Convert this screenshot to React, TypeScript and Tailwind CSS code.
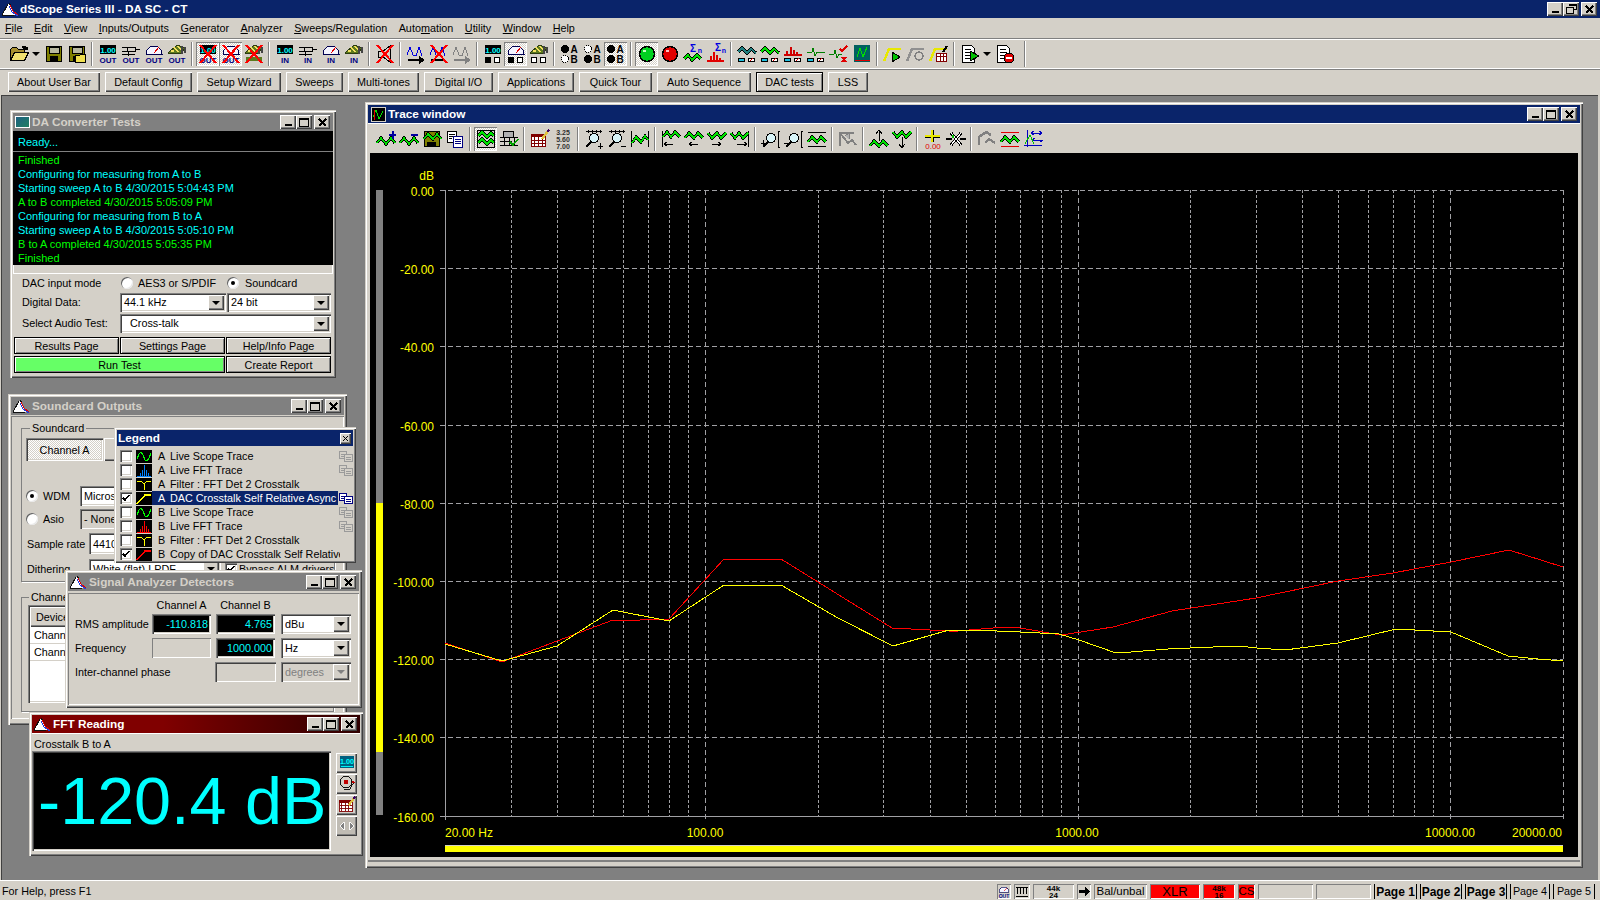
import type { ReactNode } from "react";
import clsx from "clsx";

const RAISED = "shadow-[inset_1px_1px_0_#fff,inset_-1px_-1px_0_#404040,inset_-2px_-2px_0_#808080]";
const WINDOW = "shadow-[inset_1px_1px_0_#d4d0c8,inset_2px_2px_0_#fff,inset_-1px_-1px_0_#404040,inset_-2px_-2px_0_#808080]";
const SUNKEN = "shadow-[inset_1px_1px_0_#808080,inset_2px_2px_0_#404040,inset_-1px_-1px_0_#fff,inset_-2px_-2px_0_#d4d0c8]";
const THIN_SUNKEN = "shadow-[inset_1px_1px_0_#808080,inset_-1px_-1px_0_#fff]";
const BLACK_BTN = "border border-black pt-[1px] shadow-[inset_1px_1px_0_#fff,inset_-1px_-1px_0_#808080]";
const DITHER = "bg-[repeating-conic-gradient(#fff_0_25%,#d4d0c8_0_50%)] bg-size-[2px_2px]";

const Wave = ({ d = "M2 15l4-5 5 6 5-6 4 5", c = "#00e000" }: { d?: string; c?: string }) => (
  <>
    <path d={d} fill="none" stroke="#000" strokeWidth="3" />
    <path d={d} fill="none" stroke={c} strokeWidth="1.5" />
  </>
);

const RedX = () => <path d="M3 2l16 18M19 2L3 20" stroke="#f00" strokeWidth="2" fill="none" />;
const Txt = ({ x = 11, y, s = 8, c = "#000080", t, b = true }: { x?: number; y: number; s?: number; c?: string; t: string; b?: boolean }) => (
  <text x={x} y={y} fontSize={s} fontWeight={b ? 700 : 400} fill={c} textAnchor="middle" shapeRendering="auto">{t}</text>
);

const Readout = () => (
  <>
    <rect x="3" y="2" width="16" height="9" fill="#000" />
    <Txt y={9.5} s={8} c="#00ffff" t="1.00" />
  </>
);
const Switch = () => <path d="M2 4h13v4H2M7 4v4M15 6h5M2 11h6M8 9v4M8 11h7" fill="none" stroke="#000" />;
const Meter = () => (
  <>
    <path d="M3 11a8 8 0 0 1 16 0z" fill="#f4f4ff" stroke="#000050" />
    <path d="M11 10l5-6" stroke="#e00000" />
  </>
);
const Board = () => (
  <>
    <path d="M2 10l9-8 8 3-5 6z" fill="#5d7a1e" stroke="#2c3c10" />
    <path d="M8 4l4 5M12 3l4 5M5 8h3" stroke="#f4e060" strokeWidth="1.5" />
    <path d="M16 3v8M19 4v6" stroke="#444" strokeWidth="2" />
  </>
);
const Circles = ({ a = false, b = false }: { a?: boolean; b?: boolean }) => (
  <>
    <circle cx="6" cy="17" r="3" fill={a ? "#000" : "#fff"} stroke="#000" />
    <circle cx="15" cy="17" r="3" fill={b ? "#000" : "#fff"} stroke="#000" />
  </>
);
const Floppy = () => (
  <>
    <rect x="3.5" y="3.5" width="15" height="15" fill="#808000" stroke="#000" />
    <rect x="6" y="4" width="10" height="6" fill="#b8b8a0" stroke="#000" />
    <rect x="7" y="13" width="8" height="5" fill="#000" />
  </>
);
const Calendar = () => (
  <>
    <rect x="2.5" y="6.5" width="14" height="12" fill="#fff" stroke="#800000" />
    <rect x="2" y="6" width="15" height="3" fill="#800000" />
    <path d="M5 9v9M9 9v9M13 9v9M3 12h13M3 15h13" stroke="#800000" />
    <path d="M13 11l6-8" stroke="#e0c040" strokeWidth="2.5" />
    <path d="M18 4l2-2" stroke="#400060" strokeWidth="2.5" />
  </>
);
const Magnifier = ({ m }: { m?: string }) => (
  <>
    <circle cx="11" cy="10" r="4.5" fill="#d8f4f8" stroke="#000" />
    <path d="M8 14l-5 5" stroke="#000" strokeWidth="2" />
    {m && <path d={m} stroke="#000" />}
  </>
);
const RadioAB = ({ a, b }: { a: boolean; b: boolean }) => (
  <>
    <circle cx="6" cy="6" r="3.5" fill={a ? "#000" : "#fff"} stroke="#000" strokeDasharray={a ? undefined : "1 1"} />
    <circle cx="6" cy="16" r="3.5" fill={b ? "#000" : "#fff"} stroke="#000" strokeDasharray={b ? undefined : "1 1"} />
    <Txt x={15} y={10} s={10} c="#000" t="A" />
    <Txt x={15} y={20} s={10} c="#000" t="B" />
  </>
);
const Chips = () => (
  <>
    <rect x="2.5" y="15.5" width="6" height="3" fill="#20c0e0" stroke="#000" />
    <rect x="12.5" y="15.5" width="6" height="3" fill="#fff" stroke="#000" />
    <path d="M14 17.5l3-2" stroke="#e00000" />
  </>
);
const Ramp = ({ c = "#e8e800" }: { c?: string }) => <path d="M2 18l5-12h12" fill="none" stroke={c} strokeWidth="2.5" />;
const Doc = () => (
  <>
    <path d="M3.5 2.5h9l3 3v14h-12z" fill="#fff" stroke="#000" />
    <path d="M6 6h6M6 9h7M6 12h7M6 15h7" stroke="#000" />
  </>
);
const Copies = ({ c = "#000080" }: { c?: string }) => (
  <>
    <rect x="0.5" y="0.5" width="7" height="7" fill={c === "#000080" ? "#fff" : "#d4d0c8"} stroke={c} />
    <path d="M2 3h4M2 5h4" stroke={c} />
    <rect x="5.5" y="3.5" width="8" height="7" fill={c === "#000080" ? "#fff" : "#d4d0c8"} stroke={c} />
    <path d="M7 6h5M7 8h5" stroke={c} />
  </>
);

const ICONS: Record<string, ReactNode> = {
  folder: (
    <>
      <path d="M2.5 17.5v-11l2-2h4l2 2h6v3" fill="#a89030" stroke="#000" />
      <path d="M6.5 9.5h14l-4 8h-14z" fill="#f0e070" stroke="#000" />
      <path d="M13 4q3-3 6 0l1-1v4h-4z" fill="#000" />
    </>
  ),
  floppy: <Floppy />,
  floppyOpen: (
    <>
      <Floppy />
      <path d="M9.5 19.5v-7h4l1-1h5v8z" fill="#f0e050" stroke="#000" />
    </>
  ),
  rOut: (<><Readout /><Txt y={20} t="OUT" /></>),
  sOut: (<><Switch /><Txt y={20} t="OUT" /></>),
  mOut: (<><Meter /><Txt y={20} t="OUT" /></>),
  bOut: (<><Board /><Txt y={20} t="OUT" /></>),
  rOutX: (<><Readout /><Txt y={20} t="OUT" /><RedX /></>),
  mOutX: (<><Meter /><Txt y={20} t="OUT" /><RedX /></>),
  bOutX: (<><Board /><path d="M3 14h16v4H3z" fill="#5d7a1e" /><RedX /></>),
  rIn: (<><Readout /><Txt y={20} t="IN" /></>),
  sIn: (<><Switch /><Txt y={20} t="IN" /></>),
  mIn: (<><Meter /><Txt y={20} t="IN" /></>),
  bIn: (<><Board /><Txt y={20} t="IN" /></>),
  speakerX: (
    <>
      <path d="M4 8h5l7-5v16l-7-5H4z" fill="#d4d0c8" stroke="#000" />
      <RedX />
    </>
  ),
  waveArrow: (
    <>
      <path d="M2 12l3-8 3 8 3 1 3-9 3 9" fill="none" stroke="#0000e0" />
      <path d="M3 17h12" stroke="#000" strokeWidth="2" />
      <path d="M14 13l6 4-6 4z" fill="#000" />
    </>
  ),
  waveX: (
    <>
      <path d="M2 12l3-8 3 8 3 1 3-9 3 9" fill="none" stroke="#0000e0" />
      <path d="M3 17h14" stroke="#000" strokeWidth="2" />
      <RedX />
    </>
  ),
  waveGray: (
    <>
      <path d="M2 12l3-8 3 8 3 1 3-9 3 9" fill="none" stroke="#808080" />
      <path d="M3 17h12" stroke="#808080" strokeWidth="2" />
      <path d="M14 13l6 4-6 4z" fill="#808080" />
    </>
  ),
  rCirc: (<><Readout /><Circles a /></>),
  mCirc: (<><Meter /><Circles a /></>),
  bCirc: (<><Board /><Circles /></>),
  abA: <RadioAB a b={false} />,
  abB: <RadioAB a={false} b />,
  abAB: <RadioAB a b />,
  greenBall: (
    <>
      <circle cx="11" cy="11" r="7.5" fill="#00d020" stroke="#000" strokeWidth="1.5" />
      <circle cx="8.5" cy="8" r="1.5" fill="#c0ffc0" />
    </>
  ),
  redBall: (
    <>
      <circle cx="11" cy="11" r="7.5" fill="#e00000" stroke="#000" strokeWidth="1.5" />
      <circle cx="8.5" cy="8" r="1.5" fill="#ffc0c0" />
    </>
  ),
  sigmaWave: (
    <>
      <Wave d="M2 16l4-4 4 5 5-5 4 4" />
      <Txt x={11} y={9} s={10} c="#0000e0" t="Σ" />
      <Txt x={18} y={10} s={7} c="#0000e0" t="n" />
    </>
  ),
  sigmaFft: (
    <>
      <path d="M2 18h17M6 18v-5M9 18v-9M12 18v-6M15 18v-3" stroke="#e00000" strokeWidth="2" />
      <Txt x={13} y={8} s={10} c="#0000e0" t="Σ" />
      <Txt x={19} y={10} s={7} c="#0000e0" t="n" />
    </>
  ),
  tealWave: (<><Wave d="M2 9l4-4 5 5 4-4 5 4" c="#208080" /><Chips /></>),
  greenWave: (<><Wave d="M2 9l4-4 5 5 4-4 5 4" /><Chips /></>),
  redFft: (
    <>
      <path d="M2 12h18M5 12V8M9 12V4M12 12V7M15 12V9" stroke="#d00000" strokeWidth="2" />
      <Chips />
    </>
  ),
  greenFft: (
    <>
      <path d="M2 9h5l1-4 2 8 2-4h8" fill="none" stroke="#008000" />
      <Chips />
    </>
  ),
  checkX: (
    <>
      <path d="M1 11h5l1-4 2 8 2-4h3" fill="none" stroke="#008000" />
      <path d="M12 6l2 2 5-5" fill="none" stroke="#e00000" strokeWidth="1.5" />
      <path d="M14 14l4 5M18 14l-4 5" stroke="#e00000" strokeWidth="2" />
    </>
  ),
  graphBox: (
    <>
      <rect x="3" y="2" width="16" height="17" fill="#006060" />
      <path d="M4 17h15" stroke="#e00000" />
      <path d="M6 14l3-9 3 9 4-10" fill="none" stroke="#00e000" />
    </>
  ),
  rampPlay: (<><Ramp /><path d="M10 9l8 5-8 5z" fill="#00c000" stroke="#000" /></>),
  rampGray: (<><Ramp c="#909090" /><circle cx="14" cy="13" r="4" fill="#d4d0c8" stroke="#808080" strokeWidth="1.5" /></>),
  rampCal: (<><Ramp /><rect x="8.5" y="10.5" width="10" height="8" fill="#fff" stroke="#800000" /><path d="M9 13h9M12 11v7M15 11v7" stroke="#800000" /><path d="M15 9l4-6" stroke="#000" strokeWidth="2" /></>),
  docPlay: (<><Doc /><path d="M11 8l9 5-9 5z" fill="#00c000" stroke="#000" /></>),
  docStop: (<><Doc /><circle cx="15" cy="15" r="5" fill="#e00000" stroke="#000" /><path d="M12 15h6" stroke="#fff" strokeWidth="2" /></>),
  addWave: (<><Wave /><path d="M14 7h7M17.5 3v8" stroke="#0000a0" strokeWidth="2" /></>),
  subWave: (<><Wave /><path d="M13 7h7" stroke="#0000a0" strokeWidth="2" /></>),
  saveWave: (
    <>
      <rect x="3.5" y="3.5" width="15" height="15" fill="#808000" stroke="#000" />
      <rect x="6" y="14" width="9" height="4" fill="#000" />
      <Wave d="M3 11l4-5 5 5 4-5 4 5" />
    </>
  ),
  copyDoc: (
    <>
      <rect x="3.5" y="3.5" width="9" height="11" fill="#fff" stroke="#000" />
      <path d="M5 6h6M5 8h6M5 10h3" stroke="#000" />
      <rect x="9.5" y="8.5" width="9" height="11" fill="#fff" stroke="#000080" />
      <path d="M11 11h6M11 13h6M11 15h6" stroke="#000080" />
    </>
  ),
  graphP: (
    <>
      <rect x="2.5" y="2.5" width="17" height="17" fill="#d4d0c8" stroke="#000" />
      <Wave d="M3 8l4-4 5 5 4-4 3 3" />
      <Wave d="M3 15l4-4 5 5 4-4 3 3" />
    </>
  ),
  gridGraph: (
    <>
      <path d="M5 3h10v6H5z" fill="#b0b0b0" stroke="#000" />
      <path d="M2 9h18M2 13h12M2 17h18M6 9v9M11 9v9M16 9v9" stroke="#000" />
      <path d="M12 14l3 3 5-6" fill="none" stroke="#00a000" strokeWidth="1.5" />
    </>
  ),
  calendar: <Calendar />,
  numbers: (
    <>
      <Txt y={7} c="#303030" s={7} t="3.25" />
      <Txt y={14} c="#303030" s={7} t="5.60" />
      <Txt y={21} c="#303030" s={7} t="7.00" />
    </>
  ),
  zoomIn: (<><path d="M3 3.5h16M5 2v3M9 2v3M13 2v3M17 2v3" stroke="#000" /><Magnifier m="M15 18h5M17.5 15v6" /></>),
  zoomOut: (<><path d="M3 3.5h16M5 2v3M9 2v3M13 2v3M17 2v3" stroke="#000" /><Magnifier m="M15 18h5" /></>),
  axisWave: (<><path d="M2.5 3v16M19.5 3v16" stroke="#000" /><Wave d="M3 15l4-6 5 5 4-6 3 4" /></>),
  waveEndL: (<><path d="M2.5 3v16" stroke="#000" /><Wave d="M3 9l4-5 4 5 4-5 5 5" /><path d="M4 16h9M4 16l3-2M4 16l3 2" stroke="#000" fill="none" /></>),
  waveL: (<><Wave d="M2 10l4-5 5 5 4-5 5 5" /><path d="M6 16h9M6 16l3-2M6 16l3 2" stroke="#000" fill="none" /></>),
  waveR: (<><Wave d="M2 5l4 5 5-5 4 5 5-5" /><path d="M6 16h9M15 16l-3-2M15 16l-3 2" stroke="#000" fill="none" /></>),
  waveEndR: (<><path d="M19.5 3v16" stroke="#000" /><Wave d="M2 5l4 5 4-5 4 5 5-5" /><path d="M8 16h10M18 16l-3-2M18 16l-3 2" stroke="#000" fill="none" /></>),
  zoomYIn: (<><Magnifier m="M1 15h5M3.5 12v6" /><path d="M20 3h-2v16h2" fill="none" stroke="#000" /></>),
  zoomYOut: (<><Magnifier m="M1 15h5" /><path d="M20 3h-2v16h2" fill="none" stroke="#000" /></>),
  waveBetween: (<><path d="M2 4.5h18M2 18.5h18" stroke="#000" /><Wave d="M2 14l4-5 5 5 4-5 5 5" /></>),
  grayTool: (<><path d="M3 18V5h14M3 5l8 10 4-3 4 5" fill="none" stroke="#808080" strokeWidth="2" /><path d="M8 8l4-3v6" fill="#b0b0b0" stroke="#808080" /></>),
  upWave: (<><Wave d="M2 18l4-5 5 5 4-5 5 5" /><path d="M11 13V2M11 2l-3 4M11 2l3 4" fill="none" stroke="#000" /></>),
  downWave: (<><Wave d="M2 4l4 5 5-5 4 5 5-5" /><path d="M11 9v11M11 20l-3-4M11 20l3-4" fill="none" stroke="#000" /></>),
  cursor: (
    <>
      <path d="M3 8h15M10 2v12" stroke="#000" strokeWidth="3" />
      <path d="M3 8h15M10 2v12" stroke="#e8e800" strokeWidth="1.5" />
      <Txt y={21} s={8} c="#e00000" b={false} t="0.00" />
    </>
  ),
  crossArrows: (
    <>
      <path d="M6 5l10 12M16 5L6 17" stroke="#000" strokeWidth="3" />
      <path d="M6 5l10 12M16 5L6 17" stroke="#fff" strokeWidth="1" />
      <path d="M1 11h6M21 11h-6" stroke="#000" strokeWidth="1.5" />
      <path d="M8 7v3" stroke="#00c000" strokeWidth="2" />
    </>
  ),
  grayWave: (<><path d="M3 17V9l7-5 5 3M9 15l4-4 6 4" fill="none" stroke="#808080" strokeWidth="2.5" /></>),
  redLines: (<><path d="M2 4.5h18M2 18.5h18" stroke="#e00000" /><Wave d="M2 14l4-5 5 5 4-5 5 5" /></>),
  graphArrow: (
    <>
      <path d="M5.5 2v17M2 17.5h18" stroke="#0000c0" />
      <path d="M9 5h11M9 5l3-2M9 5l3 2M20 5l-3-2M20 5l-3 2M10 12h11M10 12l3-2M21 12l-3 2" stroke="#0000c0" fill="none" />
      <path d="M3 16l5-9 4 9" fill="none" stroke="#00c000" />
    </>
  ),
  readoutLine: (<><rect x="3" y="3" width="16" height="13" fill="#006080" /><Txt y={12} s={8} c="#00ffff" t="1.00" /><path d="M4 14.5h14" stroke="#00ffff" /></>),
  recorder: (
    <>
      <circle cx="10" cy="9" r="6.5" fill="#d4d0c8" stroke="#000" />
      <circle cx="10" cy="9" r="2.5" fill="#c00000" />
      <path d="M8 17h6l4-7" fill="none" stroke="#000" />
      <circle cx="18" cy="9" r="1.5" fill="#c00000" />
    </>
  ),
  grayArrows: (<><path d="M3 11l5-4v8zM19 11l-5-4v8z" fill="#808080" stroke="#fff" /></>),
};

type Cell = string;
const MAIN: Cell[] = [
  "folder", "~", "floppy", "floppyOpen", "|", "rOut", "sOut", "mOut", "bOut", "|",
  "*rOutX", "*mOutX", "bOutX", "|", "rIn", "sIn", "mIn", "bIn", "|", "speakerX", "|",
  "waveArrow", "waveX", "waveGray", "|", "rCirc", "*mCirc", "bCirc", "|", "abA", "abB", "*abAB", "|",
  "*greenBall", "redBall", "sigmaWave", "sigmaFft", "|", "tealWave", "greenWave", "redFft", "greenFft", "checkX", "graphBox", "|",
  "rampPlay", "rampGray", "rampCal", "|", "docPlay", "~", "docStop",
];
const TRACE: Cell[] = [
  "addWave", "subWave", "saveWave", "copyDoc", "|", "*graphP", "gridGraph", "|", "calendar", "numbers", "|",
  "zoomIn", "zoomOut", "axisWave", "|", "waveEndL", "waveL", "waveR", "waveEndR", "|",
  "zoomYIn", "zoomYOut", "waveBetween", "|", "grayTool", "|", "upWave", "downWave", "|",
  "cursor", "crossArrows", "|", "grayWave", "redLines", "graphArrow",
];

function Ico({ name, size = 22 }: { name: string; size?: number }) {
  return (
    <svg width={size} height={size} viewBox="0 0 22 22" shapeRendering="crispEdges">
      {ICONS[name]}
    </svg>
  );
}

function ToolRow({ cells, className }: { cells: Cell[]; className?: string }) {
  return (
    <div className={clsx("flex items-center", className)}>
      {cells.map((c, i) => {
        if (c === "|") {
          return (
            <div key={i} className="flex h-[24px] w-[8px] justify-center">
              <div className="h-full w-[2px] border-l border-[#808080] border-r-0 bg-white" />
            </div>
          );
        }
        if (c === "~") {
          return (
            <div key={i} className="flex w-[12px] justify-center">
              <div className="border-x-[4px] border-t-[4px] border-x-transparent border-t-black" />
            </div>
          );
        }
        const pressed = c.startsWith("*");
        return (
          <div key={i} className={clsx("flex h-[24px] w-[23px] items-center justify-center", pressed && [DITHER, THIN_SUNKEN])}>
            <Ico name={pressed ? c.slice(1) : c} />
          </div>
        );
      })}
    </div>
  );
}

function MinIcon() {
  return <div className="mt-[6px] h-[2px] w-[7px] bg-black" />;
}
function MaxIcon({ gray }: { gray?: boolean }) {
  return <div className={clsx("h-[9px] w-[10px] border border-t-2", gray ? "border-[#808080]" : "border-black")} />;
}
function RestoreIcon() {
  return (
    <svg width="11" height="10" viewBox="0 0 11 10" shapeRendering="crispEdges">
      <path d="M3 1.5V0.5h7v5H8M0.5 3.5h7v6h-7z" fill="none" stroke="#000" />
      <path d="M0 3h8M3 1h7" stroke="#000" />
    </svg>
  );
}
function CloseIcon({ small }: { small?: boolean }) {
  const s = small ? 7 : 9;
  return (
    <svg width={s} height={s} viewBox="0 0 9 9" shapeRendering="crispEdges">
      <path d="M1 1l7 7M8 1L1 8" stroke="#000" strokeWidth="1.6" />
    </svg>
  );
}

function WinButtons({ gray, restore }: { gray?: boolean; restore?: boolean }) {
  const btn = clsx("flex h-[14px] w-[16px] items-center justify-center bg-[#d4d0c8]", RAISED);
  return (
    <div className="ml-auto mr-[3px] flex items-center">
      <div className={btn}><MinIcon /></div>
      <div className={btn}>{restore ? <RestoreIcon /> : <MaxIcon gray={gray} />}</div>
      <div className={clsx(btn, "ml-[2px]")}><CloseIcon /></div>
    </div>
  );
}

function Logo() {
  return (
    <svg width="18" height="14" viewBox="0 0 18 14" className="ml-[1px] shrink-0" shapeRendering="crispEdges">
      <path d="M1 13L8 1l4 7 2 5z" fill="#fff" />
      <path d="M1 13.5h12M7 2L1 13M8 1l2 3" fill="none" stroke="#111" />
      <path d="M9 3l3 6 5 4" fill="none" stroke="#e00000" />
      <path d="M8 4l3 6 6 4" fill="none" stroke="#2040e0" />
    </svg>
  );
}

function Win({ title, icon, className, bar = "bg-[#808080] text-[#d4d0c8]", gray, children }: {
  title: string; icon: ReactNode; className: string; bar?: string; gray?: boolean; children: ReactNode;
}) {
  return (
    <div className={clsx("absolute flex flex-col bg-[#d4d0c8] px-[3px] pt-[3px]", WINDOW, className)}>
      <div className={clsx("flex h-[18px] shrink-0 items-center text-[11.8px] font-bold", bar)}>
        {icon}
        <span className="ml-[2px] whitespace-nowrap pt-[1px]">{title}</span>
        <WinButtons gray={gray} />
      </div>
      {children}
    </div>
  );
}

function Arrow({ gray }: { gray?: boolean }) {
  return (
    <div className={clsx("flex h-full w-[16px] shrink-0 items-center justify-center bg-[#d4d0c8]", RAISED)}>
      <div className={clsx("border-x-[4px] border-t-[4px] border-x-transparent", gray ? "border-t-[#808080]" : "border-t-black")} />
    </div>
  );
}

function Combo({ text, className, disabled }: { text: string; className: string; disabled?: boolean }) {
  return (
    <div className={clsx("flex items-center p-[2px]", SUNKEN, disabled ? "bg-[#d4d0c8] text-[#808080]" : "bg-white", className)}>
      <span className="flex-1 overflow-hidden whitespace-nowrap pl-[2px]">{text}</span>
      <Arrow gray={disabled} />
    </div>
  );
}

function Radio({ on }: { on?: boolean }) {
  return (
    <div className="flex h-[12px] w-[12px] shrink-0 items-center justify-center rounded-full bg-white shadow-[inset_1px_1px_0_#606060,inset_-1px_-1px_0_#e8e8e8]">
      {on && <div className="h-[4px] w-[4px] rounded-full bg-black" />}
    </div>
  );
}

function Check({ on }: { on?: boolean }) {
  return (
    <div className={clsx("flex h-[12px] w-[12px] shrink-0 items-center justify-center bg-white", SUNKEN)}>
      {on && (
        <svg width="8" height="8" viewBox="0 0 8 8" shapeRendering="crispEdges">
          <path d="M1 4l2 2 4-5" fill="none" stroke="#000" strokeWidth="1.5" />
        </svg>
      )}
    </div>
  );
}

const LOG: [string, string][] = [
  ["Finished", "text-[#00ff00]"],
  ["Configuring for measuring from A to B", "text-[#00ffff]"],
  ["Starting sweep A to B 4/30/2015 5:04:43 PM", "text-[#00ffff]"],
  ["A to B completed 4/30/2015 5:05:09 PM", "text-[#00ff00]"],
  ["Configuring for measuring from B to A", "text-[#00ffff]"],
  ["Starting sweep A to B 4/30/2015 5:05:10 PM", "text-[#00ffff]"],
  ["B to A completed 4/30/2015 5:05:35 PM", "text-[#00ff00]"],
  ["Finished", "text-[#00ff00]"],
];

function DAConverter() {
  return (
    <Win
      title="DA Converter Tests"
      className="left-[10px] top-[15px] h-[268px] w-[326px]"
      icon={<div className="ml-[2px] h-[12px] w-[15px] border border-white bg-gradient-to-br from-[#206080] to-[#208060]" />}
    >
      <div className="h-[134px] shrink-0 bg-black pl-[5px] text-[11px]">
        <div className="-ml-[5px] flex h-[21px] items-center border-b border-[#808080] pl-[5px] pt-[3px] text-[#00ffff]">Ready...</div>
        {LOG.map(([t, c], i) => (
          <div key={i} className={clsx("flex h-[14px] items-center whitespace-nowrap pt-[3px]", c)}>{t}</div>
        ))}
      </div>
      <div className="h-[9px] shrink-0 border-x border-b border-white" />
      <div className="mt-[1px] flex h-[16px] items-center pl-[9px]">
        <span className="w-[99px]">DAC input mode</span>
        <Radio />
        <span className="ml-[5px] w-[89px]">AES3 or S/PDIF</span>
        <Radio on />
        <span className="ml-[6px]">Soundcard</span>
      </div>
      <div className="mt-[2px] flex h-[19px] items-center pl-[9px]">
        <span className="w-[98px]">Digital Data:</span>
        <Combo text="44.1 kHz" className="h-[19px] w-[106px]" />
        <Combo text="24 bit" className="ml-[1px] h-[19px] w-[104px]" />
      </div>
      <div className="mt-[2px] flex h-[19px] items-center pl-[9px]">
        <span className="w-[98px]">Select Audio Test:</span>
        <Combo text="Cross-talk" className="h-[19px] w-[211px] [&>span]:pl-[8px]" />
      </div>
      <div className="ml-[1px] mt-[4px] grid w-[317px] grid-cols-3 gap-x-[1px] gap-y-[2px]">
        <div className={clsx("flex h-[17px] items-center justify-center", BLACK_BTN)}>Results Page</div>
        <div className={clsx("flex h-[17px] items-center justify-center", BLACK_BTN)}>Settings Page</div>
        <div className={clsx("flex h-[17px] items-center justify-center", BLACK_BTN)}>Help/Info Page</div>
        <div className={clsx("col-span-2 flex h-[17px] items-center justify-center bg-[#66ff66]", BLACK_BTN)}>Run Test</div>
        <div className={clsx("flex h-[17px] items-center justify-center", BLACK_BTN)}>Create Report</div>
      </div>
    </Win>
  );
}

function SoundcardOutputs() {
  return (
    <Win title="Soundcard Outputs" className="left-[8px] top-[299px] h-[331px] w-[339px]" icon={<Logo />}>
      <div className={clsx("mt-[1px] h-[303px] px-[10px] pt-[4px]", THIN_SUNKEN)}>
        <fieldset className="h-[162px] border border-[#808080] pl-[4px] shadow-[1px_1px_0_#fff]">
          <legend className="ml-[4px] px-[2px]">Soundcard</legend>
          <div className="mt-[2px] flex h-[23px]">
            <div className={clsx("flex w-[77px] items-center justify-center", DITHER, SUNKEN)}>Channel A</div>
            <div className={clsx("ml-[1px] w-[77px]", RAISED)} />
          </div>
          <div className="mt-[25px] flex h-[20px] items-center">
            <Radio on />
            <span className="ml-[5px] w-[37px]">WDM</span>
            <div className={clsx("flex h-full w-[150px] items-center bg-white pl-[4px]", SUNKEN)}>Microsoft</div>
          </div>
          <div className="mt-[3px] flex h-[20px] items-center">
            <Radio />
            <span className="ml-[5px] w-[37px]">Asio</span>
            <div className={clsx("flex h-full w-[150px] items-center bg-[#d4d0c8] pl-[4px]", SUNKEN)}>- None -</div>
          </div>
          <div className="mt-[4px] flex h-[21px] items-center pl-[1px]">
            <span className="w-[62px]">Sample rate</span>
            <div className={clsx("flex h-full w-[70px] items-center bg-white pl-[4px]", SUNKEN)}>44100</div>
          </div>
          <div className="mt-[5px] flex h-[20px] items-center pl-[1px]">
            <span className="w-[62px]">Dithering</span>
            <Combo text="White (flat) LPDF" className="h-[20px] w-[132px]" />
            <div className="ml-[4px]"><Check on /></div>
            <span className="ml-[2px] whitespace-nowrap">Bypass ALM drivers</span>
          </div>
        </fieldset>
        <fieldset className="mt-[7px] h-[123px] border border-[#808080] px-[6px] shadow-[1px_1px_0_#fff]">
          <legend className="ml-[1px] px-[2px]">Channels</legend>
          <div className={clsx("h-[98px] bg-white p-[2px]", SUNKEN)}>
            <div className={clsx("flex h-[20px] items-center bg-[#d4d0c8] pl-[6px]", RAISED)}>Device</div>
            <div className="flex h-[17px] items-center border-b border-[#d4d0c8] pl-[4px]">Channel A</div>
            <div className="flex h-[17px] items-center border-b border-[#d4d0c8] pl-[4px]">Channel B</div>
          </div>
        </fieldset>
      </div>
    </Win>
  );
}

const LEGEND = [
  { ch: "A", name: "Live Scope Trace", icon: "scope", copy: "gray" },
  { ch: "A", name: "Live FFT Trace", icon: "fftA", copy: "gray" },
  { ch: "A", name: "Filter : FFT Det 2 Crosstalk", icon: "filter" },
  { ch: "A", name: "DAC Crosstalk Self Relative Async", icon: "rampY", copy: "on", checked: true, selected: true },
  { ch: "B", name: "Live Scope Trace", icon: "scope", copy: "gray" },
  { ch: "B", name: "Live FFT Trace", icon: "fftB", copy: "gray" },
  { ch: "B", name: "Filter : FFT Det 2 Crosstalk", icon: "filter" },
  { ch: "B", name: "Copy of DAC Crosstalk Self Relative", icon: "rampR", checked: true },
];

function TraceThumb({ kind }: { kind: string }) {
  return (
    <svg width="16" height="13" viewBox="0 0 16 13" className="shrink-0" shapeRendering="crispEdges">
      <rect width="16" height="13" fill="#000" />
      {kind === "scope" && <path d="M1 9l2-5 2-2 2 3 2 5 2 1 2-3 2-5" fill="none" stroke="#00ff00" />}
      {kind === "fftA" && <path d="M1 12h14M4 12V9M6 12V6M8 12V1M10 12V6M12 12V9" stroke="#0080ff" />}
      {kind === "fftB" && <path d="M1 12h14M4 12V9M6 12V6M8 12V1M10 12V6M12 12V9" stroke="#ff0000" />}
      {kind === "filter" && <path d="M1 3h4l3 3v6M15 3h-4L8 6" fill="none" stroke="#ffff00" />}
      {kind === "rampY" && <path d="M1 12l8-9h6" fill="none" stroke="#ffff00" strokeWidth="1.5" />}
      {kind === "rampR" && <path d="M1 12l8-9h6" fill="none" stroke="#ff0000" strokeWidth="1.5" />}
    </svg>
  );
}

function Legend() {
  return (
    <div className={clsx("absolute left-[114px] top-[332px] h-[136px] w-[242px] bg-[#d4d0c8] px-[3px] pt-[3px]", WINDOW)}>
      <div className="flex h-[16px] items-center bg-[#0a246a] pl-[1px] pt-[1px] text-[11.8px] font-bold text-white">
        Legend
        <div className={clsx("ml-auto mr-[2px] flex h-[11px] w-[11px] items-center justify-center bg-[#d4d0c8]", RAISED)}><CloseIcon small /></div>
      </div>
      <div className="mt-[3px]">
        {LEGEND.map((row, i) => (
          <div key={i} className="flex h-[14px] items-center pl-[3px]">
            <Check on={row.checked} />
            <div className="ml-[4px]"><TraceThumb kind={row.icon} /></div>
            <div className={clsx("flex h-full w-[188px] items-center overflow-hidden whitespace-nowrap pl-[6px] pt-[1px]", row.selected && "bg-[#0a246a] text-white")}>
              <span className="w-[12px] shrink-0">{row.ch}</span>
              <span>{row.name}</span>
            </div>
            {row.copy && (
              <svg width="14" height="11" viewBox="0 0 14 11" className="ml-[1px] shrink-0" shapeRendering="crispEdges">
                <Copies c={row.copy === "on" ? "#000080" : "#9a9a9a"} />
              </svg>
            )}
          </div>
        ))}
      </div>
    </div>
  );
}

function Detectors() {
  const field = clsx("flex h-[20px] w-[59px] items-center justify-end bg-black pr-[3px] pt-[1px] text-[#00ffff]", SUNKEN);
  return (
    <Win title="Signal Analyzer Detectors" className="left-[65px] top-[475px] h-[138px] w-[297px]" icon={<Logo />}>
      <div className={clsx("mt-[2px] h-[112px] pl-[7px] pt-[5px]", THIN_SUNKEN)}>
        <div className="flex h-[14px] items-center">
          <span className="w-[77px]" />
          <span className="w-[59px] text-center">Channel A</span>
          <span className="ml-[5px] w-[59px] text-center">Channel B</span>
        </div>
        <div className="mt-[2px] flex h-[20px] items-center">
          <span className="w-[77px] whitespace-nowrap pt-[1px]">RMS amplitude</span>
          <div className={field}>-110.818</div>
          <div className={clsx(field, "ml-[5px]")}>4.765</div>
          <Combo text="dBu" className="ml-[6px] h-[20px] w-[70px]" />
        </div>
        <div className="mt-[4px] flex h-[20px] items-center">
          <span className="w-[77px] pt-[1px]">Frequency</span>
          <div className={clsx("h-[20px] w-[59px]", THIN_SUNKEN)} />
          <div className={clsx(field, "ml-[5px]")}>1000.000</div>
          <Combo text="Hz" className="ml-[6px] h-[20px] w-[70px]" />
        </div>
        <div className="mt-[4px] flex h-[20px] items-center">
          <span className="w-[140px] whitespace-nowrap pt-[1px]">Inter-channel phase</span>
          <div className={clsx("h-[20px] w-[61px]", SUNKEN)} />
          <Combo text="degrees" className="ml-[5px] h-[20px] w-[70px]" disabled />
        </div>
      </div>
    </Win>
  );
}

function FftReading() {
  const side = clsx("mb-[1px] flex h-[20px] w-[21px] items-center justify-center", RAISED);
  return (
    <Win
      title="FFT Reading"
      className="left-[29px] top-[617px] h-[144px] w-[334px]"
      icon={<Logo />}
      bar="bg-gradient-to-r from-[#800000] from-40% to-[#300000] text-white"
    >
      <div className="flex h-[18px] shrink-0 items-center border-t border-white pl-[2px] pt-[3px]">Crosstalk B to A</div>
      <div className="flex flex-1 pb-[5px]">
        <div className={clsx("flex w-[299px] items-center overflow-hidden bg-black pl-[6px] text-[66.5px] leading-none whitespace-nowrap text-[#00ffff]", SUNKEN)}>
          -120.4 dB
        </div>
        <div className="ml-[5px] pt-[2px]">
          <div className={side}><Ico name="readoutLine" size={20} /></div>
          <div className={side}><Ico name="recorder" size={20} /></div>
          <div className={side}><Ico name="calendar" size={20} /></div>
          <div className={clsx(side, "bg-[#c0bcb4]")}><Ico name="grayArrows" size={20} /></div>
        </div>
      </div>
    </Win>
  );
}

const YELLOW: [number, number][] = [
  [445, 645], [502, 662], [557, 647], [613, 611], [669, 622], [724, 586], [781, 586], [838, 619], [893, 647],
  [949, 631], [973, 631], [1020, 633], [1059, 635], [1079, 641], [1116, 654], [1131, 653], [1168, 650],
  [1213, 648], [1238, 647], [1257, 649], [1285, 651], [1338, 644], [1396, 630], [1451, 633], [1508, 657],
  [1538, 660], [1563, 662],
];
const RED: [number, number][] = [
  [445, 644], [502, 663], [557, 642], [613, 621], [640, 621], [669, 620], [724, 560], [781, 560], [892, 629],
  [911, 630], [949, 632], [958, 632], [981, 630], [1006, 628], [1020, 629], [1061, 636], [1068, 635],
  [1113, 628], [1172, 612], [1256, 599], [1338, 582], [1393, 574], [1451, 563], [1509, 551], [1563, 568],
];

const fx = (f: number) => Math.round(445 + 372.5 * Math.log10(f / 20)) + 0.5;
const fy = (i: number) => Math.round(191 + 78.2 * i) + 0.5;
const MINOR = [30, 40, 50, 60, 70, 80, 90, 200, 300, 400, 500, 600, 700, 800, 900, 2000, 3000, 4000, 5000, 6000, 7000, 8000, 9000];
const DB = ["0.00", "-20.00", "-40.00", "-60.00", "-80.00", "-100.00", "-120.00", "-140.00", "-160.00"];
const GRID = "#a0a0a4";

function Plot() {
  return (
    <svg width="1208" height="704" viewBox="370 154 1208 704" className="block" shapeRendering="crispEdges" fill="#ffff00" fontSize="12">
      <rect x="376" y="191" width="7" height="625" fill="#808080" />
      <rect x="376" y="504" width="7" height="249" fill="#ffff00" />
      {DB.map((t, i) => (
        <g key={t}>
          {i < 8 && <path d={`M440 ${fy(i)}H1563`} stroke={GRID} strokeDasharray="5 3" />}
          {i === 8 && <path d={`M440 ${fy(i)}H1563`} stroke={GRID} />}
          <text x="434" y={fy(i) + 5} textAnchor="end" shapeRendering="auto">{t}</text>
        </g>
      ))}
      <text x="434" y="181" textAnchor="end" shapeRendering="auto">dB</text>
      <path d={`M445.5 191V821`} stroke={GRID} />
      {MINOR.map((f) => <path key={f} d={`M${fx(f)} 191V817`} stroke={GRID} strokeDasharray="3 2" />)}
      {[100, 1000, 10000, 20000].map((f) => <path key={f} d={`M${fx(f)} 191V821`} stroke={GRID} strokeDasharray="5 3" />)}
      <polyline points={RED.map((p) => p.join(",")).join(" ")} fill="none" stroke="#ff0000" />
      <polyline points={YELLOW.map((p) => p.join(",")).join(" ")} fill="none" stroke="#ffff00" />
      <text x="445" y="838" shapeRendering="auto">20.00 Hz</text>
      <text x="705" y="838" textAnchor="middle" shapeRendering="auto">100.00</text>
      <text x="1077" y="838" textAnchor="middle" shapeRendering="auto">1000.00</text>
      <text x="1450" y="838" textAnchor="middle" shapeRendering="auto">10000.00</text>
      <text x="1537" y="838" textAnchor="middle" shapeRendering="auto">20000.00</text>
      <rect x="445" y="846" width="1118" height="7" fill="#ffff00" />
      <path d="M445 846.5H1563" stroke="#d4d0c8" />
    </svg>
  );
}

function TraceWindow() {
  return (
    <Win
      title="Trace window"
      className="left-[365px] top-[7px] h-[766px] w-[1218px]"
      bar="bg-[#0a246a] text-white"
      icon={
        <svg width="15" height="15" viewBox="0 0 15 15" className="ml-[3px]" shapeRendering="crispEdges">
          <rect x="0.5" y="0.5" width="14" height="14" fill="#000" stroke="#d4d0c8" />
          <path d="M2 10l3-7 3 9 4-8" fill="none" stroke="#00e000" />
          <path d="M3 3v10" stroke="#e00000" />
        </svg>
      }
    >
      <div className="h-[30px] shrink-0 border-t border-white pt-[3px]">
        <ToolRow cells={TRACE} className="ml-[6px]" />
      </div>
      <div className={clsx("mx-[2px] h-[704px] w-[1208px] shrink-0 bg-black")}>
        <Plot />
      </div>
      <div className="mt-[3px] h-[2px] border-y border-[#808080]" />
    </Win>
  );
}

const MENU: [string, string, string][] = [
  ["", "F", "ile"], ["", "E", "dit"], ["", "V", "iew"], ["", "I", "nputs/Outputs"], ["", "G", "enerator"], ["", "A", "nalyzer"],
  ["", "S", "weeps/Regulation"], ["Auto", "m", "ation"], ["", "U", "tility"], ["", "W", "indow"], ["", "H", "elp"],
];

const USER_BAR: [string, string][] = [
  ["About User Bar", "w-[92px]"], ["Default Config", "w-[87px]"], ["Setup Wizard", "w-[84px]"], ["Sweeps", "w-[57px]"],
  ["Multi-tones", "w-[71px]"], ["Digital I/O", "w-[69px]"], ["Applications", "w-[76px]"], ["Quick Tour", "w-[73px]"],
  ["Auto Sequence", "w-[94px]"], ["DAC tests", "w-[67px]"], ["LSS", "w-[40px]"],
];

function StatusBar() {
  const cell = clsx("flex h-[15px] items-center justify-center whitespace-nowrap", THIN_SUNKEN);
  const page = "flex h-[15px] items-center justify-center whitespace-nowrap border-x border-black";
  return (
    <div className="flex h-[20px] shrink-0 items-center border-t border-white pl-[2px] pt-[2px]">
      <span>For Help, press F1</span>
      <div className="ml-auto mr-[5px] flex items-center gap-[3px]">
        <div className={clsx(cell, "w-[14px]")}><Ico name="mOut" size={14} /></div>
        <div className={clsx(cell, "w-[16px]")}>
          <svg width="14" height="13" viewBox="0 0 14 13" shapeRendering="crispEdges">
            <path d="M1 2h12M2 2v7M5 2v7M8 2v7M11 2v7M1 11h12" stroke="#000" fill="none" />
          </svg>
        </div>
        <div className={clsx(cell, "w-[41px] flex-col text-[8px] leading-[7px] font-bold")}><span>44k</span><span>24</span></div>
        <div className={clsx(cell, "w-[14px]")}>
          <svg width="12" height="9" viewBox="0 0 12 9" shapeRendering="crispEdges">
            <path d="M1 4.5h6" stroke="#000" strokeWidth="3" />
            <path d="M7 0l5 4.5L7 9z" fill="#000" />
          </svg>
        </div>
        <div className={clsx(cell, "w-[53px] text-[11.5px]")}>Bal/unbal</div>
        <div className={clsx(cell, "w-[50px] bg-[#ff0000] text-[13px]")}>XLR</div>
        <div className={clsx(cell, "w-[32px] flex-col overflow-hidden bg-[#ff0000] text-[8px] leading-[7px] font-bold")}><span>48k</span><span>16</span></div>
        <div className={clsx(cell, "w-[17px] bg-[#ff0000] text-[11.5px]")}>CS</div>
        <div className={clsx(cell, "w-[55px]")} />
        <div className={clsx(cell, "w-[55px]")} />
        <div className={clsx(page, "w-[43px] text-[12px] font-bold")}>Page 1</div>
        <div className={clsx(page, "w-[42px] text-[12px] font-bold")}>Page 2</div>
        <div className={clsx(page, "w-[42px] text-[12px] font-bold")}>Page 3</div>
        <div className={clsx(page, "w-[40px]")}>Page 4</div>
        <div className={clsx(page, "w-[42px]")}>Page 5</div>
      </div>
    </div>
  );
}

export default function App() {
  return (
    <div className="flex h-[900px] w-[1600px] flex-col overflow-hidden bg-[#d4d0c8] font-['Liberation_Sans',Arial,sans-serif] text-[10.8px] text-black">
      <div className="flex h-[18px] shrink-0 items-center bg-[#0a246a] text-[11.8px] font-bold text-white">
        <Logo />
        <span className="ml-[1px] pt-[1px]">dScope Series III - DA SC - CT</span>
        <WinButtons restore />
      </div>

      <div className="flex h-[20px] shrink-0 items-center gap-[11.5px] pl-[5px]">
        {MENU.map(([a, u, b]) => (
          <span key={u + b}>{a}<span className="underline">{u}</span>{b}</span>
        ))}
      </div>

      <div className="h-[32px] shrink-0 border-y border-t-[#808080] border-b-[#808080] pl-[7px] pt-[2px] shadow-[inset_0_1px_0_#fff,inset_0_-1px_0_#fff]">
        <div className="flex items-center">
          <ToolRow cells={MAIN} />
          <div className="ml-[8px] h-[26px] w-[2px] border-l border-[#808080] bg-white" />
        </div>
      </div>

      <div className="flex h-[25px] shrink-0 gap-[5px] pl-[8px] pt-[2px]">
        {USER_BAR.map(([t, w]) => (
          <div key={t} className={clsx("flex h-[20px] items-center justify-center pt-[1px]", w, t === "DAC tests" ? "border border-black shadow-[inset_1px_1px_0_#fff,inset_-1px_-1px_0_#808080]" : RAISED)}>{t}</div>
        ))}
      </div>

      <div className="relative flex-1 overflow-hidden bg-[#808080] shadow-[inset_1px_0_0_#d4d0c8,inset_2px_0_0_#404040,inset_-2px_0_0_#d4d0c8,inset_0_1px_0_#404040]">
        <DAConverter />
        <SoundcardOutputs />
        <Legend />
        <Detectors />
        <FftReading />
        <TraceWindow />
      </div>

      <StatusBar />
    </div>
  );
}
